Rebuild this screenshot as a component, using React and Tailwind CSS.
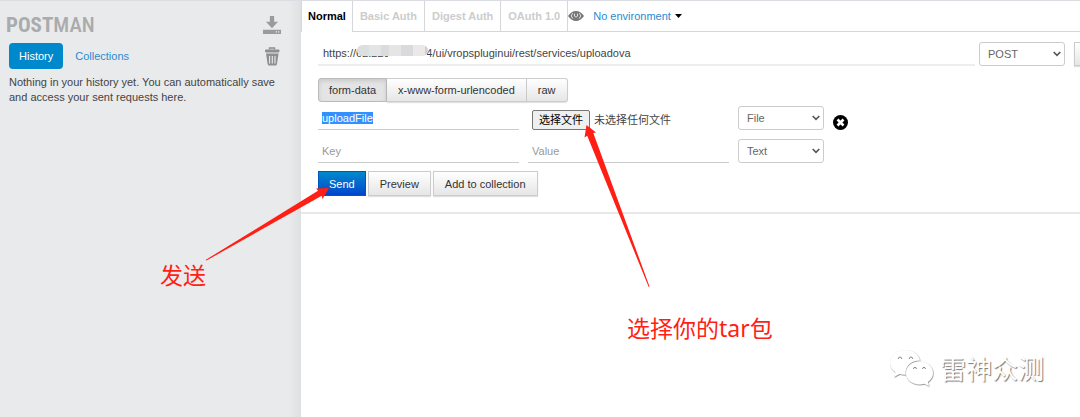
import { useEffect, useRef } from "react";

const field =
  "h-6 w-full min-w-0 border-b border-[#ccc] bg-white px-1 text-[11px] leading-3 text-[#555] outline-none placeholder:text-[#999]";
const plainButton =
  "border border-[#ccc] bg-linear-to-b from-white to-[#e6e6e6] text-[#333] shadow-[0_1px_1px_rgba(0,0,0,0.12)]";

function Picker({ label, options, value }) {
  return (
    <div className="relative w-[86px] shrink-0">
      <select
        aria-label={label}
        defaultValue={value}
        className="h-6 w-full appearance-none rounded-[3px] border border-[#ccc] bg-white pl-2 text-[11px] text-[#666]"
      >
        {options.map((option) => (
          <option key={option}>{option}</option>
        ))}
      </select>
      <svg className="pointer-events-none absolute top-2 right-1 h-2 w-2" viewBox="0 0 8 8" fill="none" stroke="#555" strokeWidth="1.6">
        <path d="M0.7 2 L4 5.3 L7.3 2" />
      </svg>
    </div>
  );
}

function Sidebar() {
  return (
    <aside className="w-[301px] shrink-0 bg-linear-to-r from-[#e9eaeb] from-96% to-[#dfe0e1] px-2 pt-3">
      <div className="flex items-center justify-between pr-3">
        <h1 className="-ml-0.5 font-['Roboto_Condensed','Open_Sans_Condensed',Roboto,sans-serif] text-[21px] leading-6 font-medium text-[#a9abac]">
          <b>POST</b>MAN
        </h1>
        <button aria-label="Import">
          <svg width="18" height="18" viewBox="0 0 17 17" fill="#999b9c">
            <path d="M6.5 0h4v5.5h3.7L8.5 11.5 2.8 5.5h3.7zM0 13h17v4H0z" />
            <path d="M12 14.5h1.2v1H12zM14.2 14.5h1.2v1h-1.2z" fill="#e9eaeb" />
          </svg>
        </button>
      </div>
      <div className="mt-1.5 flex items-center justify-between pr-3">
        <nav className="flex items-center">
          <a href="#history" className="ml-px rounded-[4px] bg-[#08c] px-2.5 py-1.5 text-[11px] leading-[14px] text-white">
            History
          </a>
          <a href="#collections" className="ml-3 text-[11px] leading-[14px] text-[#2a8cd0]">
            Collections
          </a>
        </nav>
        <button aria-label="Delete history">
          <svg width="17" height="19" viewBox="0 0 17 19">
            <path d="M5.5 2.5V1h5v1.5" fill="none" stroke="#8d8f90" strokeWidth="1.4" />
            <rect x="1" y="2.4" width="14.4" height="3" rx="0.8" fill="#8d8f90" />
            <path d="M2 6.6h12.6L13 17q-.2 1.6-1.6 1.6H5.2Q3.8 18.6 3.6 17z" fill="#8d8f90" />
            <path d="M5.6 9v7.5M8.3 9v7.5M11 9v7.5" stroke="#e9eaeb" strokeWidth="1.1" />
          </svg>
        </button>
      </div>
      <p className="mt-1.5 pl-px text-[11px] leading-[15px] text-[#444]">
        Nothing in your history yet. You can automatically save and access your sent requests here.
      </p>
    </aside>
  );
}

function Tabs() {
  const rest = "border-b border-l border-[#d5d6d8] px-[7px] text-[#ccc]";
  return (
    <div className="flex h-[31px] text-[11px] font-bold whitespace-nowrap">
      <button className="border-l border-[#d5d6d8] px-1.5 text-black">Normal</button>
      <button className={rest}>Basic Auth</button>
      <button className={rest}>Digest Auth</button>
      <button className={rest}>OAuth 1.0</button>
      <div className="flex grow items-center border-b border-l border-[#d5d6d8] font-normal">
        <svg width="16" height="10" viewBox="0 0 16 10">
          <path d="M0 5Q3.5 0 8 0t8 5q-3.5 5-8 5T0 5z" fill="#777" />
          <path d="M4.6 2.2Q1.8 5 4.8 7.5M11.4 2.2Q14.2 5 11.2 7.5" fill="none" stroke="#fff" strokeWidth="0.8" />
          <path d="M6.5 2.6v2.6q1.5 2 3 0V2.6" fill="none" stroke="#eee" strokeWidth="0.9" />
        </svg>
        <button className="flex items-center gap-1 pl-[9px] text-[#2a8cd0]">
          No environment
          <svg width="7" height="4" viewBox="0 0 7 4">
            <path d="M0 0h7L3.5 4z" fill="#000" />
          </svg>
        </button>
      </div>
    </div>
  );
}

function RequestForm() {
  const keyRef = useRef(null);
  useEffect(() => {
    keyRef.current.focus();
    keyRef.current.select();
  }, []);

  return (
    <form className="border-b-2 border-[#e8e8e8] pt-2.5 pb-4 pl-[17px]" onSubmit={(e) => e.preventDefault()}>
      <div className="flex">
        <div className="relative min-w-0 grow">
          <input
            aria-label="Request URL"
            defaultValue="https://62.220.000.004/ui/vropspluginui/rest/services/uploadova"
            className="h-6 w-full border-b-2 border-[#eee] px-[5px] text-[11px] text-[#444] outline-none"
          />
          <div className="absolute top-[11px] left-[70px] h-[9px] w-[39px] bg-white" />
          <div className="absolute top-[3px] left-[39px] flex h-[11px] w-[71px] overflow-hidden rounded-full">
            <i className="w-3 bg-[#dcdfe0]" />
            <i className="w-3 bg-[#e3e4e4]" />
            <i className="w-2 bg-[#d9dbdc]" />
            <i className="w-3 bg-[#e6e5e5]" />
            <i className="w-3 bg-[#d8dadb]" />
            <i className="w-3 bg-[#ece8e7]" />
            <i className="grow bg-[#cfd1d2]" />
          </div>
        </div>
        <div className="ml-1">
          <Picker label="Method" value="POST" options={["GET", "POST", "PUT", "DELETE"]} />
        </div>
        <button type="button" aria-label="URL params" className={`ml-[9px] h-6 w-[6px] border-r-0 ${plainButton}`} />
      </div>

      <div className="mt-3 flex text-[11px] leading-[14px] text-[#333]">
        <button type="button" className="h-6 rounded-l-[3px] border border-[#bbb] bg-[#e4e4e4] px-2.5 shadow-[inset_0_2px_4px_rgba(0,0,0,0.12)]">
          form-data
        </button>
        <button type="button" className={`h-6 border-l-0 px-[11px] ${plainButton}`}>
          x-www-form-urlencoded
        </button>
        <button type="button" className={`h-6 rounded-r-[3px] border-l-0 px-[11px] ${plainButton}`}>
          raw
        </button>
      </div>

      <div className="mt-1 flex gap-[9px]">
        <div className="w-[201px]">
          <input
            ref={keyRef}
            aria-label="Key"
            defaultValue="uploadFile"
            className={`${field} border-[#aaa] selection:bg-[#3390ff] selection:text-white`}
          />
        </div>
        <div className="flex w-[201px] items-center gap-1 pt-1 pl-1 text-[11px] text-[#444]">
          <label
            htmlFor="upload"
            className="flex h-5 items-center rounded-[2px] border border-[#767676] bg-[#efefef] px-1.5 text-black"
          >
            选择文件
          </label>
          <input id="upload" type="file" className="sr-only" />
          <span>未选择任何文件</span>
        </div>
        <Picker label="Value type" value="File" options={["Text", "File"]} />
        <button type="button" aria-label="Remove row" className="mt-2">
          <svg width="15" height="15" viewBox="0 0 15 15">
            <circle cx="7.5" cy="7.5" r="7.5" fill="#000" />
            <path d="M4.5 4.5l6 6M10.5 4.5l-6 6" stroke="#fff" strokeWidth="2.6" />
          </svg>
        </button>
      </div>

      <div className="mt-[9px] flex gap-[9px]">
        <div className="w-[201px]">
          <input aria-label="New key" placeholder="Key" className={field} />
        </div>
        <div className="w-[201px]">
          <input aria-label="New value" placeholder="Value" className={field} />
        </div>
        <Picker label="New value type" value="Text" options={["Text", "File"]} />
      </div>

      <div className="mt-2 flex gap-0.5 text-[11px] leading-[14px]">
        <button type="submit" className="h-[25px] border border-[#0055bb] bg-linear-to-b from-[#0088cc] to-[#0044cc] px-2.5 text-white">
          Send
        </button>
        <button type="button" className={`h-[25px] px-[11px] ${plainButton}`}>
          Preview
        </button>
        <button type="button" className={`h-[25px] px-[11px] ${plainButton}`}>
          Add to collection
        </button>
      </div>
    </form>
  );
}

function Annotations() {
  const note =
    "absolute font-['Noto_Sans','Noto_Sans_CJK_SC',sans-serif] text-[23px] leading-7 whitespace-nowrap text-[#ff1f14]";
  return (
    <div className="pointer-events-none">
      <svg className="absolute top-[179px] left-[200px]" width="140" height="90" viewBox="200 180 140 90" fill="#ff1f14">
        <path d="M205.5 260L318 190.8l-2-2.3 13-.5-6.5 11-.8-3.2L206.5 260.5z" />
      </svg>
      <svg className="absolute top-[119px] left-[576px]" width="80" height="170" viewBox="576 120 80 170" fill="#ff1f14">
        <path d="M586.5 125l9.5 7.5-2.7.6L649.5 286.5l-.8.5L587.2 135.8l-2.7 1.8z" />
      </svg>
      <p className={`${note} top-[260px] left-[160px]`}>发送</p>
      <p className={`${note} top-[313px] left-[627px]`}>选择你的tar包</p>
      <div className="absolute top-[347px] right-9 flex items-center gap-1.5">
        <svg width="46" height="40" viewBox="0 0 44 40">
          <defs>
            <filter id="edge" x="-10%" y="-10%" width="120%" height="120%">
              <feDropShadow dx="0.4" dy="0.6" stdDeviation="0.6" floodColor="#555" floodOpacity="1" />
            </filter>
          </defs>
          <g fill="#fff" filter="url(#edge)">
            <path d="M16 2C7.5 2 1 7.5 1 14.5c0 4 2 7.3 5.5 9.7L5 29l5.5-3q3 .9 6 .8C16 18 22 12.5 31 12.5 29.5 6 23.5 2 16 2z" />
            <path d="M30.5 13.5C23 13.5 17 18.5 17 25s6 11.5 13.5 11.5q2.5 0 5-.8l4.5 2.5-1.2-4.2C42 31.8 44 28.7 44 25c0-6.5-6-11.5-13.5-11.5z" />
          </g>
          <g fill="none" stroke="#888" strokeWidth="1">
            <path d="M9.2 11q.2-2 1.8-2t1.8 2M20.2 11q.2-2 1.8-2t1.8 2" />
            <path d="M24.5 21q.2-1.7 1.5-1.7t1.5 1.7M33.5 21q.2-1.7 1.5-1.7t1.5 1.7" />
          </g>
        </svg>
        <p className="font-['Noto_Sans_CJK_SC',sans-serif] text-[26px] leading-10 text-white [text-shadow:1px_1px_1px_#777]">
          雷神众测
        </p>
      </div>
    </div>
  );
}

export default function App() {
  return (
    <div className="relative flex min-h-screen overflow-hidden border-t border-[#dcdde3] bg-white font-['Liberation_Sans','Noto_Sans_CJK_SC',sans-serif] text-[11px]">
      <Sidebar />
      <main className="min-w-0 grow">
        <Tabs />
        <RequestForm />
      </main>
      <Annotations />
    </div>
  );
}
